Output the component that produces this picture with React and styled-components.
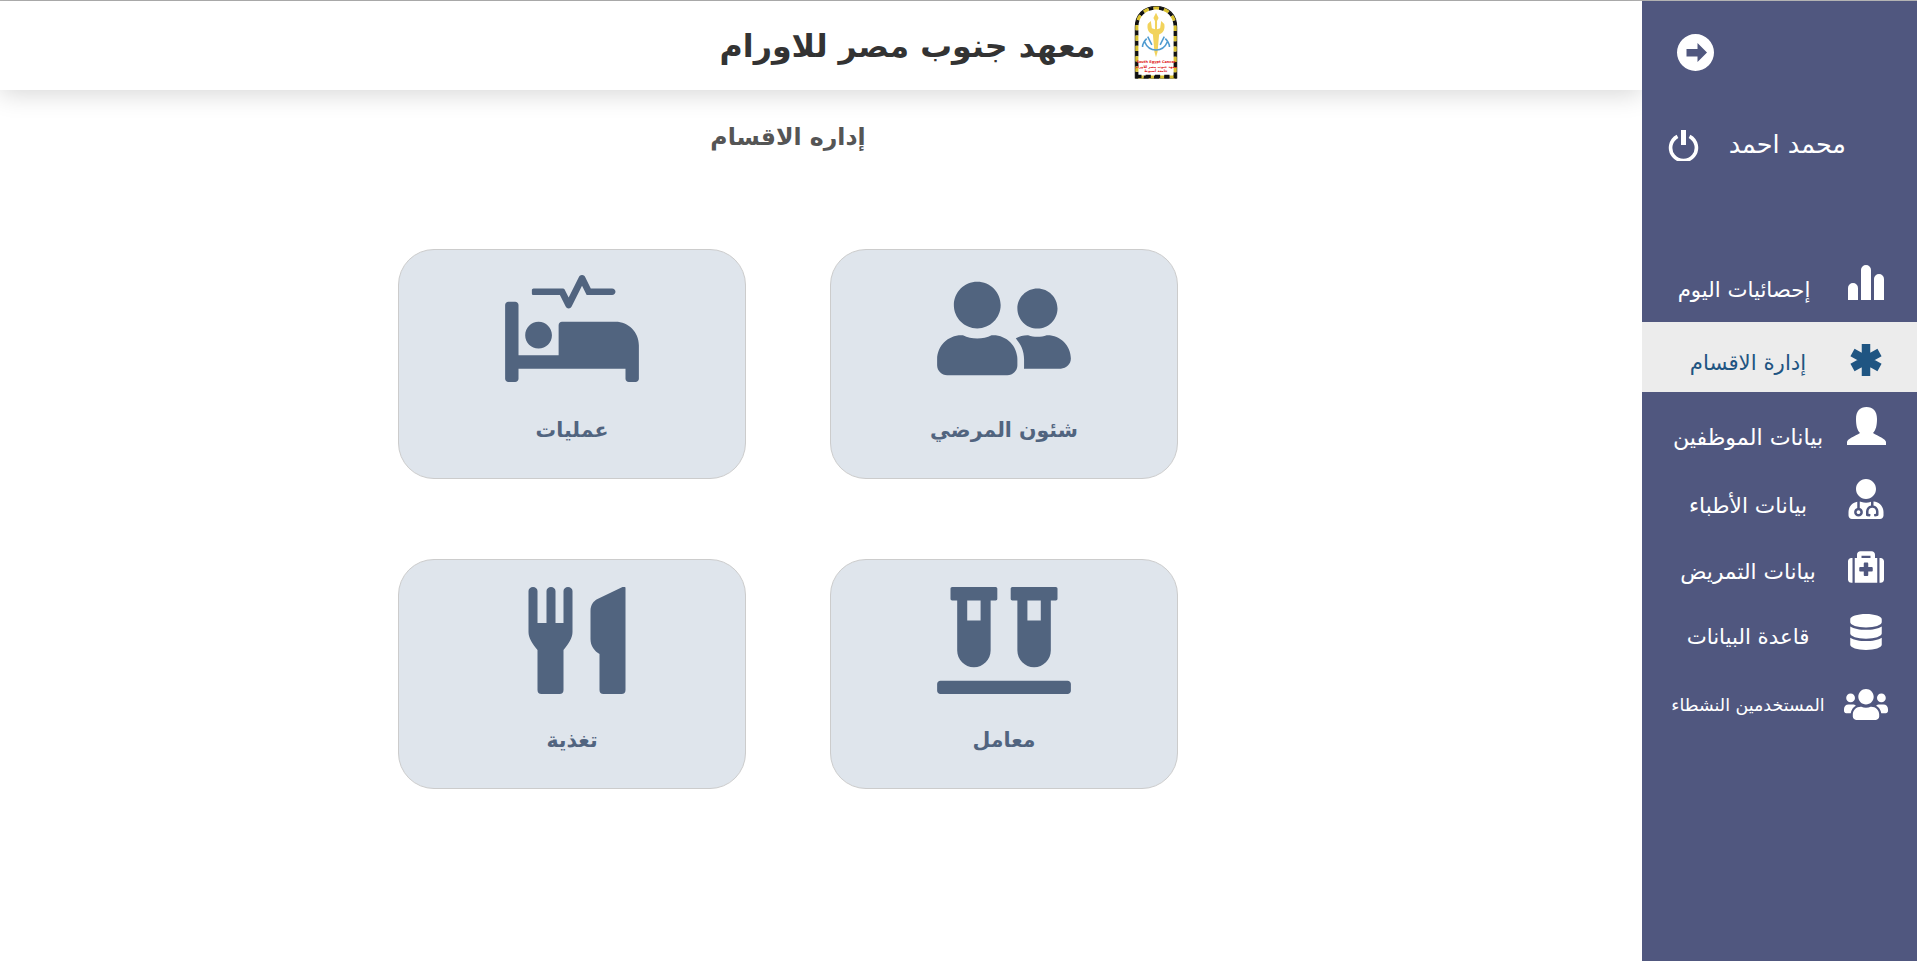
import React from 'react';
import styled, { createGlobalStyle } from 'styled-components';
import {
  FaUserMd,
  FaMedkit,
  FaDatabase,
  FaUsers,
  FaUserFriends,
  FaProcedures,
  FaVials,
} from 'react-icons/fa';

const GlobalStyle = createGlobalStyle`
  html, body {
    margin: 0;
    padding: 0;
    background: #fff;
    direction: rtl;
    font-family: "DejaVu Sans", "Noto Sans", sans-serif;
  }
  * { box-sizing: border-box; }
`;

const BackIcon = () => (
  <svg width="37" height="37" viewBox="0 0 37 37" fill="currentColor" fillRule="evenodd">
    <path d="M18.5 0a18.5 18.5 0 1 1 0 37a18.5 18.5 0 1 1 0-37zM9.5 15v7.5h11v5.5l9.5-9.5-9.5-9.5v6z" />
  </svg>
);

const StatsIcon = () => (
  <svg width="36" height="35" viewBox="0 0 36 35" fill="currentColor">
    <path d="M0 35V23a5 5 0 0 1 10 0v12zM13 35V5a5 5 0 0 1 10 0v30zM26 35V14a5 5 0 0 1 10 0v21z" />
  </svg>
);

const AsteriskIcon = () => (
  <svg width="32" height="32" viewBox="0 0 32 32" stroke="currentColor" strokeWidth="8.5">
    <path d="M16 0v32M2.5 8.5l27 15M2.5 23.5l27-15" />
  </svg>
);

const UserIcon = () => (
  <svg width="39" height="38" viewBox="0 0 39 38" fill="currentColor">
    <path d="M0 38v-3c0-3 8-6 13-9-3-3-4-8-4-14C9 4 13 0 19.5 0S30 4 30 12c0 6-1 11-4 14 5 3 13 6 13 9v3z" />
  </svg>
);

const PowerIcon = () => (
  <svg width="31" height="31" viewBox="0 0 31 31" fill="none" stroke="currentColor" strokeWidth="3.6">
    <path d="M9.5 6.3a12.9 12.9 0 1 0 12 0" />
    <path d="M15.5 0v15" strokeWidth="5" />
  </svg>
);

// fork and straight-backed knife, the package's utensils glyph has another shape
const UtensilsIcon = () => (
  <svg viewBox="-9.5 0 107 107" fill="currentColor">
    <path d="M0 4a4.5 4 0 0 1 9 0v32h9V4a4.5 4 0 0 1 9 0v32h8V4a4.5 4 0 0 1 9 0v41c0 6-4 12-9 18v40a4 4 0 0 1-4 4H13a4 4 0 0 1-4-4V63C4 57 0 51 0 45z" />
    <path d="M97 1v102a4 4 0 0 1-4 4H75a4 4 0 0 1-4-4V67c-5-3-9-8-9-15V24c0-6 3-10 7-12L94 0c2-1 3 0 3 1z" />
  </svg>
);

const InstituteLogo = () => (
  <svg width="44" height="73" viewBox="1.5 1.5 41 70.5">
    <path d="M2 71V22C2 10 10 2 22 2s20 8 20 20v49z" fill="#fff" stroke="#111" strokeWidth="1" />
    <path
      d="M3.5 70V22C3.5 11 11 3.5 22 3.5S40.5 11 40.5 22v48z"
      fill="none"
      stroke="#111"
      strokeWidth="3"
      strokeDasharray="5 5"
    />
    <path
      d="M3.5 70V22C3.5 11 11 3.5 22 3.5S40.5 11 40.5 22v48z"
      fill="none"
      stroke="#d9c12e"
      strokeWidth="3"
      strokeDasharray="5 5"
      strokeDashoffset="5"
    />
    <path d="M3 69.5h38" stroke="#111" strokeWidth="3" strokeDasharray="5 4" />
    <path
      d="M22 8l2.5 5-1.5 3v8l3-1 1-7 3 3c1 5-1 9-5 10l-1.5 17-1.5 5-1.5-5-1.5-17c-4-1-6-5-5-10l3-3 1 7 3 1v-8l-1.5-3z"
      fill="#f2d35c"
    />
    <path
      d="M13 33c-2 2-4 4-4 8M31 33c2 2 4 4 4 8M11 36c2 5 6 8 11 8s9-3 11-8M14 31l4 8M30 31l-4 8"
      fill="none"
      stroke="#4f9bd0"
      strokeWidth="1.5"
    />
    <text x="22" y="57" fontSize="3.4" fontWeight="700" fill="#e11b22" textAnchor="middle" direction="ltr">South Egypt Cancer</text>
    <text x="22" y="61" fontSize="3.4" fontWeight="700" fill="#e11b22" textAnchor="middle">معهد جنوب مصر للاورام</text>
    <text x="22" y="65" fontSize="3.4" fontWeight="700" fill="#e11b22" textAnchor="middle">جامعة أسيوط</text>
  </svg>
);

const Page = styled.div`
  display: grid;
  grid-template-columns: 275px 1fr;
  min-height: 100vh;
  border-top: 1px solid #b3b3b3;
`;

const Sidebar = styled.aside`
  position: relative;
  z-index: 2;
  background: #50577f;
  color: #fff;
  display: flex;
  flex-direction: column;
`;

const SideTop = styled.div`
  height: 249px;
  display: flex;
  flex-direction: column;
`;

const BackLink = styled.div`
  height: 104px;
  padding: 33px 203px 0 0;
  line-height: 0;
  direction: ltr;
  display: flex;
  justify-content: flex-end;
  svg { display: block; }
`;

const Account = styled.div`
  display: flex;
  align-items: center;
  padding: 23.5px 71px 0 0;
  gap: 30px;
  font-size: 25.5px;
  line-height: 30px;
  svg { display: block; }
`;

const AccountName = styled.span`
  padding-bottom: 4px;
`;

const NavList = styled.nav`
  display: flex;
  flex-direction: column;
`;

const NavRow = styled.div`
  height: ${(p) => p.$h}px;
  display: grid;
  grid-template-columns: 44px 192px;
  padding: 0 29px 0 10px;
  align-items: start;
  background: ${(p) => (p.$active ? '#ececec' : 'transparent')};
  color: ${(p) => (p.$active ? '#1f5582' : '#fff')};
`;

const NavIcon = styled.span`
  display: flex;
  justify-content: center;
  margin-top: ${(p) => p.$top}px;
  font-size: ${(p) => p.$size || 36}px;
  line-height: 0;
  svg { display: block; }
`;

const NavText = styled.span`
  text-align: center;
  white-space: nowrap;
  font-size: ${(p) => p.$size || 21.3}px;
  line-height: 28px;
  margin-top: ${(p) => p.$top}px;
  margin-right: ${(p) => p.$shift || 0}px;
`;

const Main = styled.main`
  min-width: 0;
`;

const Header = styled.header`
  height: 89px;
  background: #fff;
  box-shadow: 0 4px 24px rgba(0, 0, 0, 0.16);
  display: flex;
  align-items: center;
  justify-content: center;
  gap: 39px;
  padding-left: 256px;
`;

const Logo = styled.div`
  line-height: 0;
  margin-top: -7px;
`;

const SiteTitle = styled.h1`
  margin: 0;
  font-size: 31.7px;
  font-weight: 700;
  color: #333;
  white-space: nowrap;
`;

const Content = styled.div`
  padding-right: 66px;
  display: flex;
  flex-direction: column;
  align-items: center;
`;

const SectionTitle = styled.h2`
  margin: 30px 0 0;
  font-size: 23.6px;
  line-height: 34px;
  font-weight: 700;
  color: #555;
`;

const CardGrid = styled.div`
  margin-top: 95px;
  display: grid;
  grid-template-columns: 348px 348px;
  column-gap: 84px;
  row-gap: 80px;
`;

const Card = styled.a`
  height: 230px;
  background: #dfe5ec;
  border: 1px solid #ccc;
  border-radius: 36px;
  color: #51647f;
  display: grid;
  grid-template-rows: 164px 32px;
  justify-items: center;
`;

const CardIcon = styled.span`
  margin-top: ${(p) => p.$top}px;
  line-height: 0;
  svg {
    display: block;
    width: ${(p) => p.$w}px;
    height: 107px;
  }
`;

const CardLabel = styled.span`
  font-size: 20.5px;
  line-height: 32px;
  font-weight: 700;
`;

const navItems = [
  { label: 'إحصائيات اليوم', icon: <StatsIcon />, h: 72, iconTop: 15, textTop: 26, textShift: 8 },
  { label: 'إدارة الاقسام', icon: <AsteriskIcon />, h: 70, active: true, iconTop: 22, textTop: 27 },
  { label: 'بيانات الموظفين', icon: <UserIcon />, h: 70, iconTop: 15, textTop: 31, textSize: 22.2 },
  { label: 'بيانات الأطباء', icon: <FaUserMd />, size: 40, h: 70, iconTop: 17, textTop: 30, textSize: 21.7 },
  { label: 'بيانات التمريض', icon: <FaMedkit />, size: 36, h: 64, iconTop: 17, textTop: 26, textSize: 21.7 },
  { label: 'قاعدة البيانات', icon: <FaDatabase />, size: 36, h: 60, iconTop: 18, textTop: 27 },
  { label: 'المستخدمين النشطاء', icon: <FaUsers />, size: 45, h: 60, iconTop: 26, textTop: 35, textSize: 17.4 },
];

const cards = [
  { label: 'شئون المرضي', icon: <FaUserFriends />, top: 25, w: 134 },
  { label: 'عمليات', icon: <FaProcedures />, top: 25, w: 134 },
  { label: 'معامل', icon: <FaVials />, top: 27, w: 134 },
  { label: 'تغذية', icon: <UtensilsIcon />, top: 27, w: 107 },
];

export default function App() {
  return (
    <>
      <GlobalStyle />
      <Page>
        <Sidebar>
          <SideTop>
            <BackLink>
              <BackIcon />
            </BackLink>
            <Account>
              <AccountName>محمد احمد</AccountName>
              <PowerIcon />
            </Account>
          </SideTop>
          <NavList>
            {navItems.map((item) => (
              <NavRow key={item.label} $h={item.h} $active={item.active}>
                <NavIcon $size={item.size} $top={item.iconTop}>{item.icon}</NavIcon>
                <NavText $size={item.textSize} $top={item.textTop} $shift={item.textShift}>{item.label}</NavText>
              </NavRow>
            ))}
          </NavList>
        </Sidebar>
        <Main>
          <Header>
            <Logo>
              <InstituteLogo />
            </Logo>
            <SiteTitle>معهد جنوب مصر للاورام</SiteTitle>
          </Header>
          <Content>
            <SectionTitle>إداره الاقسام</SectionTitle>
            <CardGrid>
              {cards.map((card) => (
                <Card key={card.label}>
                  <CardIcon $top={card.top} $w={card.w}>{card.icon}</CardIcon>
                  <CardLabel>{card.label}</CardLabel>
                </Card>
              ))}
            </CardGrid>
          </Content>
        </Main>
      </Page>
    </>
  );
}
